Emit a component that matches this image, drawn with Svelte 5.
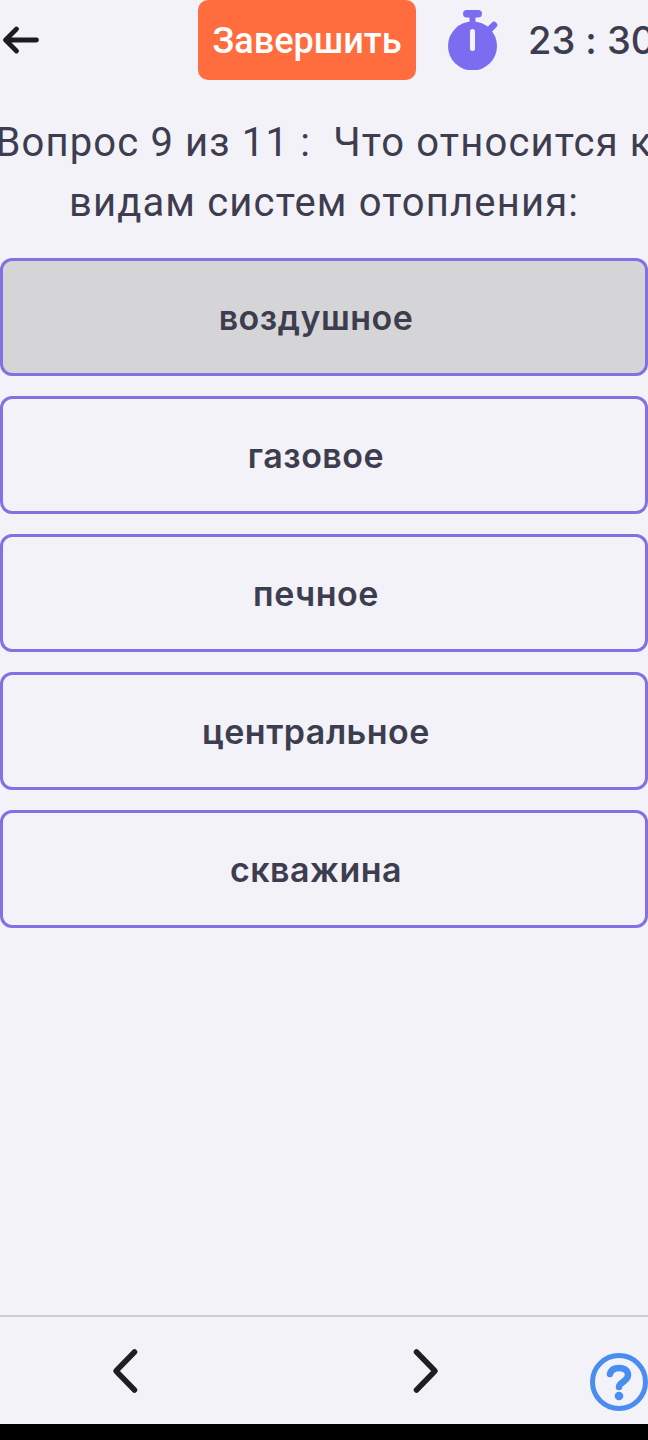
<script>
  const answers = ["воздушное", "газовое", "печное", "центральное", "скважина"];
  let selected = $state(0);
</script>

<div class="page">
  <header class="top">
    <button class="back" aria-label="Назад">
      <svg width="38" height="32" viewBox="0 0 38 32" fill="none" stroke="#1d1b20" stroke-width="4.800" stroke-linecap="round" stroke-linejoin="round">
        <path d="M34.500 16H4M14.500 5L3.500 16L14.500 27" />
      </svg>
    </button>
    <button class="finish">Завершить</button>
    <svg class="clock" width="52" height="60" viewBox="0 0 52 60">
      <circle cx="24.500" cy="36" r="24.500" fill="#7c6cf0" />
      <rect x="15" y="0" width="19" height="7.500" rx="3.700" fill="#7c6cf0" />
      <rect x="21.500" y="4" width="6" height="10" fill="#7c6cf0" />
      <path d="M39 22L46 15" stroke="#7c6cf0" stroke-width="6.500" stroke-linecap="round" />
      <rect x="22" y="19" width="5" height="22" rx="2.500" fill="#f2f2f8" />
    </svg>
    <span class="time">23 : 30</span>
  </header>

  <h1 class="question">
    <span>Вопрос 9 из 11 :&nbsp; Что относится к</span>
    <span>видам систем отопления:</span>
  </h1>

  <div class="answers">
    {#each answers as answer, i}
      <button class="answer" class:active={selected === i} onclick={() => (selected = i)}>{answer}</button>
    {/each}
  </div>

  <footer class="bottom">
    <button class="nav" aria-label="Назад">
      <svg width="30" height="46" viewBox="0 0 30 46" fill="none" stroke="#1f1f1f" stroke-width="5.500" stroke-linecap="round" stroke-linejoin="round">
        <path d="M24.500 4L6 23L24.500 42" />
      </svg>
    </button>
    <button class="nav" aria-label="Вперёд">
      <svg width="30" height="46" viewBox="0 0 30 46" fill="none" stroke="#1f1f1f" stroke-width="5.500" stroke-linecap="round" stroke-linejoin="round">
        <path d="M5.500 4L24 23L5.500 42" />
      </svg>
    </button>
    <svg class="help" width="60" height="60" viewBox="0 0 60 60" fill="none" stroke="#4a8cf0" stroke-width="5" stroke-linecap="round" stroke-linejoin="round">
      <circle cx="30" cy="30" r="26.500" />
      <path d="M21 22c1-4 4-6 9-6c6 0 9 3 9 7c0 4-3 5-5 7c-3 2-4 3-4 5" stroke-width="6.500" />
      <circle cx="30" cy="44" r="4.300" fill="#4a8cf0" stroke="none" />
    </svg>
  </footer>
  <div class="system-bar"></div>
</div>

<style>
  :global(body) {
    margin: 0;
    background: #f2f2f8;
  }
  .page {
    width: 648px;
    height: 1440px;
    overflow: hidden;
    display: flex;
    flex-direction: column;
    background: #f2f2f8;
    color: #3d3d4f;
    font-family: Inter, sans-serif;
  }
  button {
    font-family: inherit;
    cursor: pointer;
    border: none;
    background: none;
    padding: 0;
  }
  .top {
    height: 80px;
    display: flex;
    align-items: center;
    padding-left: 2px;
    flex: none;
  }
  .back {
    display: flex;
    margin-right: 158px;
  }
  .finish {
    width: 218px;
    height: 80px;
    flex: none;
    border-radius: 10px;
    background: #ff6c3e;
    color: #fff;
    font-family: Roboto, sans-serif;
    font-size: 36px;
    font-weight: 500;
    padding-top: 2px;
  }
  .clock {
    flex: none;
    margin-left: 32px;
  }
  .time {
    flex: none;
    margin-left: 28px;
    font-size: 38px;
    font-weight: 500;
    white-space: nowrap;
    font-feature-settings: "calt" 0;
  }
  .question {
    margin: 33px 0 0;
    display: flex;
    flex-direction: column;
    align-items: center;
    font-family: Roboto, sans-serif;
    font-size: 40px;
    font-weight: 400;
    line-height: 60px;
    letter-spacing: 1.15px;
    white-space: nowrap;
    flex: none;
  }
  .answers {
    margin-top: 25px;
    display: flex;
    flex-direction: column;
    gap: 20px;
    flex: none;
  }
  .answer {
    height: 118px;
    box-sizing: border-box;
    padding-right: 16px;
    border: 3px solid #8470e2;
    border-radius: 12px;
    color: #3d3d4f;
    font-size: 34px;
    font-weight: 600;
    letter-spacing: 0.5px;
  }
  .answer.active {
    background: #d5d5d8;
  }
  .bottom {
    margin-top: auto;
    height: 109px;
    box-sizing: border-box;
    border-top: 2px solid #cdcdd2;
    position: relative;
    display: flex;
    align-items: center;
    padding: 0 0 0 110px;
    gap: 271px;
    flex: none;
  }
  .nav {
    display: flex;
  }
  .help {
    position: absolute;
    left: 589px;
    top: 35px;
  }
  .system-bar {
    height: 16px;
    background: #000;
    flex: none;
  }
</style>
